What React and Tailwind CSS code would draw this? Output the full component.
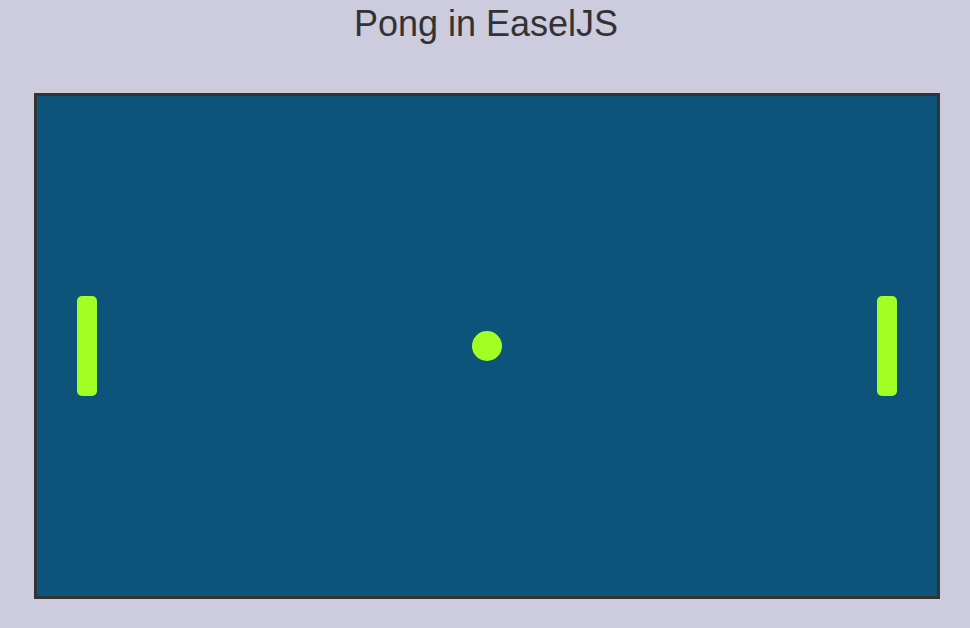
import React from 'react';

const Paddle = ({ left }) => (
  <div
    className="absolute top-[200px] w-[20px] h-[100px] rounded-[5px] bg-[#a2ff24]"
    style={{ left }}
  />
);

const App = () => {
  return (
    <div className="min-h-screen w-full bg-[#cdcbde] font-['Liberation_Sans',Arial,sans-serif]">
      {/* Title */}
      <h1 className="pt-[3px] text-center text-[36px] leading-[41px] text-[#333333] pl-[2px]">
        Pong in EaselJS
      </h1>

      {/* Game canvas */}
      <div className="ml-[34px] mt-[49px] w-[906px] h-[506px] border-[3px] border-[#333333] bg-[#0c5479]">
        <div className="relative w-[900px] h-[500px]">
          <Paddle left={40} />
          <Paddle left={840} />
          <div className="absolute left-[435px] top-[235px] w-[30px] h-[30px] rounded-full bg-[#a2ff24]" />
        </div>
      </div>
    </div>
  );
};

export default App;
